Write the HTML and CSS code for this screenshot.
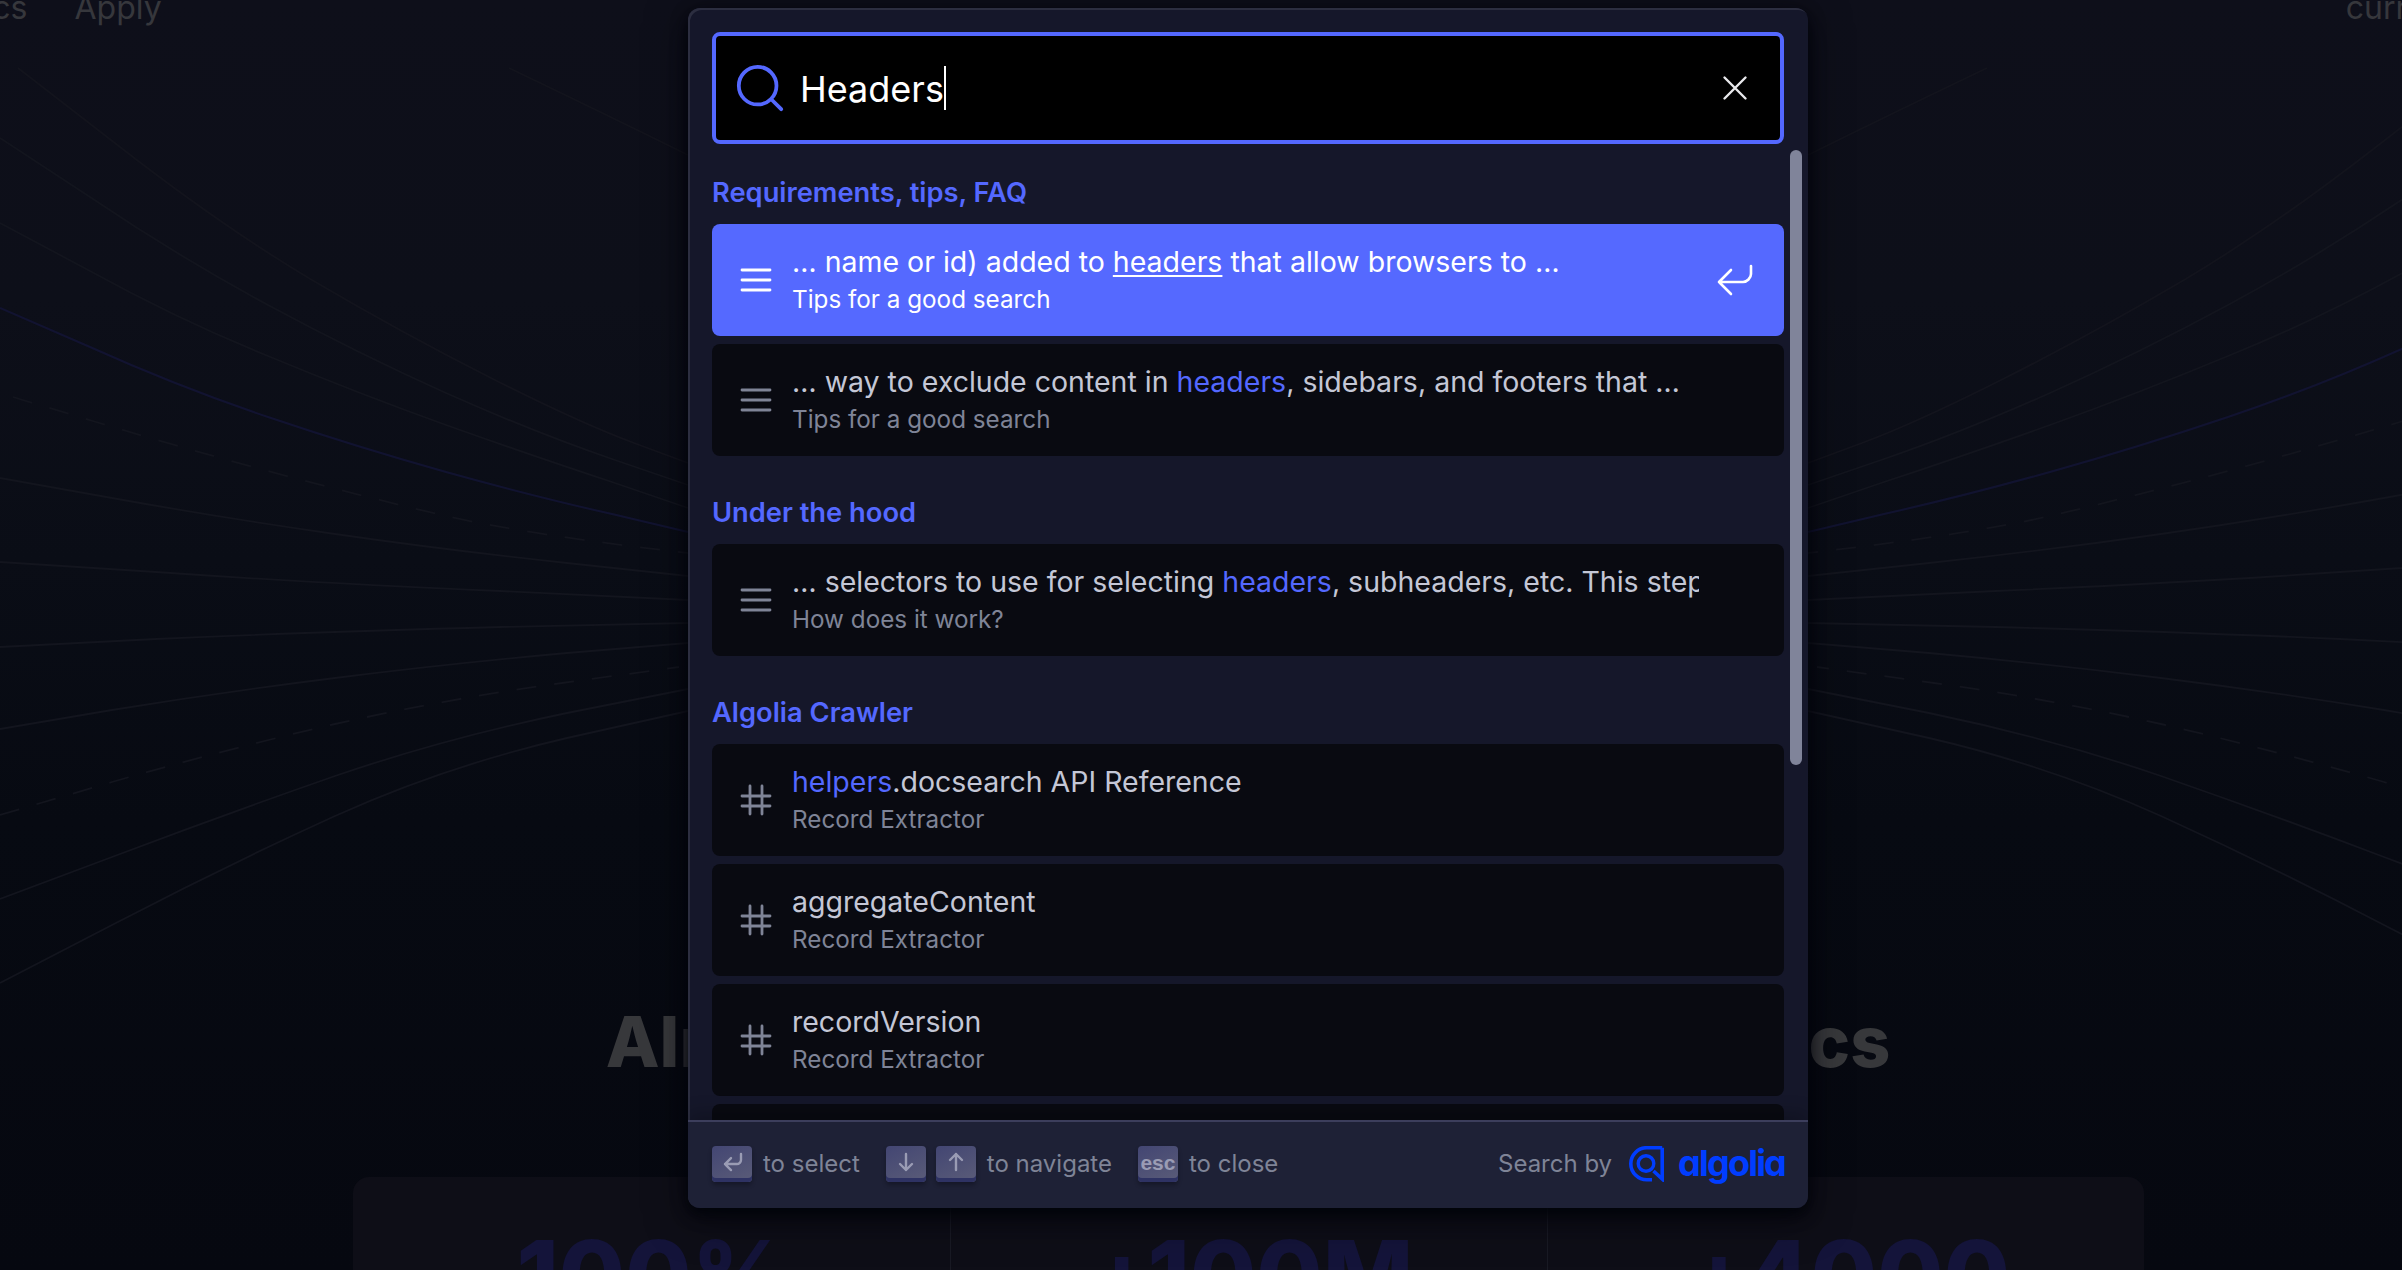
FILE: index.html
```html
<!DOCTYPE html>
<html lang="en">
<head>
<meta charset="utf-8">
<title>DocSearch</title>
<link rel="stylesheet" href="styles.css">
</head>
<body>
<div class="page">
  <svg class="rays" width="2496" height="1270" viewBox="0 0 2496 1270" fill="none">
    <defs>
      <g id="rayset">
        <path class="ray faint" d="M509 68Q603 113 688 155"/>
        <path class="ray faint" d="M18 68L120 147Q223 227 312 280Q402 333 491 378Q580 423 634 443L688 463"/>
        <path class="ray" d="M0 138L90 197Q179 257 268 305Q357 353 446 393Q536 433 612 459L688 485"/>
        <path class="ray" d="M0 223L90 271Q179 320 268 356Q357 393 446 425Q536 457 612 482L688 508"/>
        <path class="ray blue" d="M0 308L90 347Q179 387 268 417Q357 447 446 472Q536 497 612 514L688 532"/>
        <path class="ray dash" d="M13 397L96 422Q179 447 268 471Q357 495 446 516Q530 535 688 553"/>
        <path class="ray" d="M0 478L112 498Q223 518 335 534Q446 550 567 563L688 576"/>
        <path class="ray" d="M0 562L156 572Q312 583 500 591L688 600"/>
        <path class="ray" d="M0 647L156 639Q312 632 500 627L688 623"/>
        <path class="ray" d="M0 729L112 710Q223 692 335 678Q446 664 567 653L688 643"/>
        <path class="ray dash" d="M0 815L112 782Q223 750 335 724Q446 699 562 683L679 667"/>
        <path class="ray" d="M0 899L112 857Q223 815 335 776Q446 738 567 713L688 689"/>
        <path class="ray" d="M0 983L112 925Q223 867 335 816Q446 766 567 738L688 711"/>
      </g>
    </defs>
    <use href="#rayset"/>
    <use href="#rayset" transform="matrix(-1 0 0 1 2496 0)"/>
  </svg>

  <nav class="nav">
    <span class="nav-link">Docs</span>
    <span class="nav-link">Apply</span>
    <span class="nav-link nav-right">current</span>
  </nav>

  <h2 class="headline">Already powering open-source docs</h2>

  <section class="stats">
    <div class="stat">100%</div>
    <div class="stat"><span class="plus">+</span>100M</div>
    <div class="stat"><span class="plus">+</span>4000</div>
  </section>

  <div class="modal">
    <form class="searchbar">
      <svg class="search-icon" width="50" height="50" viewBox="0 0 20 20" fill="none"><path d="M14.386 14.386l4.0877 4.0877-4.0877-4.0877c-2.9418 2.9419-7.7115 2.9419-10.6533 0-2.9419-2.9418-2.9419-7.7115 0-10.6533 2.9418-2.9419 7.7115-2.9419 10.6533 0 2.9419 2.9418 2.9419 7.7115 0 10.6533z" stroke="currentColor" stroke-width="1.5" stroke-linecap="round" stroke-linejoin="round"/></svg>
      <span class="query">Headers</span><span class="caret"></span>
      <svg class="clear-icon" width="26" height="26" viewBox="0 0 26 26" fill="none"><path d="M2.5 2.5l21 21M23.5 2.5l-21 21" stroke="currentColor" stroke-width="2.4" stroke-linecap="round"/></svg>
    </form>

    <div class="dropdown">
      <section class="source">
        <div class="source-title">Requirements, tips, FAQ</div>
        <div class="hit selected">
          <svg class="hit-icon" width="40" height="40" viewBox="0 0 20 20" fill="none"><path d="M17 5H3M17 10H3M17 15H3" stroke="currentColor" stroke-width="1.4" stroke-linecap="round"/></svg>
          <div class="hit-body">
            <div class="hit-title">… name or id) added to <mark>headers</mark> that allow browsers to …</div>
            <div class="hit-path">Tips for a good search</div>
          </div>
          <svg class="hit-return" width="40" height="40" viewBox="0 0 20 20" fill="none"><path d="M18 3v4c0 2-2 4-4 4H2M8 17l-6-6 6-6" stroke="currentColor" stroke-width="1.3" stroke-linecap="round" stroke-linejoin="round"/></svg>
        </div>
        <div class="hit">
          <svg class="hit-icon" width="40" height="40" viewBox="0 0 20 20" fill="none"><path d="M17 5H3M17 10H3M17 15H3" stroke="currentColor" stroke-width="1.4" stroke-linecap="round"/></svg>
          <div class="hit-body">
            <div class="hit-title">… way to exclude content in <mark>headers</mark>, sidebars, and footers that …</div>
            <div class="hit-path">Tips for a good search</div>
          </div>
        </div>
      </section>

      <section class="source">
        <div class="source-title">Under the hood</div>
        <div class="hit">
          <svg class="hit-icon" width="40" height="40" viewBox="0 0 20 20" fill="none"><path d="M17 5H3M17 10H3M17 15H3" stroke="currentColor" stroke-width="1.4" stroke-linecap="round"/></svg>
          <div class="hit-body">
            <div class="hit-title">… selectors to use for selecting <mark>headers</mark>, subheaders, etc. This step is often</div>
            <div class="hit-path">How does it work?</div>
          </div>
        </div>
      </section>

      <section class="source">
        <div class="source-title">Algolia Crawler</div>
        <div class="hit">
          <svg class="hit-icon" width="40" height="40" viewBox="0 0 20 20" fill="none"><path d="M13 13h4-4V8H7v5h6v4-4H7V8H3h4V3v5h6V3v5h4-4v5zm-6 0v4-4H3h4z" stroke="currentColor" stroke-width="1.4" stroke-linecap="round" stroke-linejoin="round"/></svg>
          <div class="hit-body">
            <div class="hit-title"><mark>helpers</mark>.docsearch API Reference</div>
            <div class="hit-path">Record Extractor</div>
          </div>
        </div>
        <div class="hit">
          <svg class="hit-icon" width="40" height="40" viewBox="0 0 20 20" fill="none"><path d="M13 13h4-4V8H7v5h6v4-4H7V8H3h4V3v5h6V3v5h4-4v5zm-6 0v4-4H3h4z" stroke="currentColor" stroke-width="1.4" stroke-linecap="round" stroke-linejoin="round"/></svg>
          <div class="hit-body">
            <div class="hit-title">aggregateContent</div>
            <div class="hit-path">Record Extractor</div>
          </div>
        </div>
        <div class="hit">
          <svg class="hit-icon" width="40" height="40" viewBox="0 0 20 20" fill="none"><path d="M13 13h4-4V8H7v5h6v4-4H7V8H3h4V3v5h6V3v5h4-4v5zm-6 0v4-4H3h4z" stroke="currentColor" stroke-width="1.4" stroke-linecap="round" stroke-linejoin="round"/></svg>
          <div class="hit-body">
            <div class="hit-title">recordVersion</div>
            <div class="hit-path">Record Extractor</div>
          </div>
        </div>
        <div class="hit"></div>
      </section>
      <div class="scroll-thumb"></div>
    </div>

    <footer class="footer">
      <ul class="commands">
        <li class="command">
          <kbd class="key"><svg width="30" height="30" viewBox="0 0 15 15" fill="none"><path d="M12 3.53v3c0 1-1 2-2 2H4M7 11.53l-3-3 3-3" stroke="currentColor" stroke-width="1.2" stroke-linecap="round" stroke-linejoin="round"/></svg></kbd>
          <span class="command-label">to select</span>
        </li>
        <li class="command">
          <kbd class="key"><svg width="30" height="30" viewBox="0 0 15 15" fill="none"><path d="M7.5 3.5v8M10.5 8.5l-3 3-3-3" stroke="currentColor" stroke-width="1.2" stroke-linecap="round" stroke-linejoin="round"/></svg></kbd>
          <kbd class="key"><svg width="30" height="30" viewBox="0 0 15 15" fill="none"><path d="M7.5 11.5v-8M10.5 6.5l-3-3-3 3" stroke="currentColor" stroke-width="1.2" stroke-linecap="round" stroke-linejoin="round"/></svg></kbd>
          <span class="command-label">to navigate</span>
        </li>
        <li class="command">
          <kbd class="key key-text">esc</kbd>
          <span class="command-label">to close</span>
        </li>
      </ul>
      <div class="brand">
        <span class="brand-label">Search by</span>
        <svg class="brand-mark" width="35" height="36" viewBox="0 0 35 36" fill="none"><path d="M33.2 1.7H17.8C9 1.7 1.8 8.900 1.800 17.700S9 33.700 17.800 33.700H23M33.200 1.700V33L24.500 25" stroke="currentColor" stroke-width="3.600"/><circle cx="17" cy="17.500" r="7.800" stroke="currentColor" stroke-width="3.400"/></svg>
        <span class="brand-name">algolia</span>
      </div>
    </footer>
  </div>
</div>
</body>
</html>
```

FILE: styles.css
```css
* { box-sizing: border-box; }
html, body { margin: 0; padding: 0; height: 100%; overflow: hidden; background: #070a12; }
body { font-family: "Inter", "Liberation Sans", sans-serif; }

.page {
  position: relative;
  width: 2496px;
  height: 1270px;
  overflow: hidden;
  background: linear-gradient(180deg, #0e0f1a 0, #0d0f19 300px, #0a0d16 560px, #070a12 820px, #060810 1270px);
}

.rays { position: absolute; left: 0; top: 0; }
.ray { stroke: #13151e; stroke-width: 1.8; }
.ray.faint { stroke: #13141d; }
.ray.blue { stroke: #14153a; stroke-opacity: .75; stroke-width: 2; }
.ray.dash { stroke-dasharray: 20 18; }

.nav {
  position: relative;
  display: flex;
  gap: 47px;
  margin: -10px 41px 0 -50px;
  font-size: 32px;
  line-height: 36px;
  color: #36373c;
}
.nav-right { margin-left: auto; }

.headline {
  position: relative;
  margin: 0;
  padding-top: 974px;
  font-size: 70px;
  line-height: 84px;
  font-weight: 800;
  word-spacing: 7px;
  text-align: center;
  color: #37383b;
}

.stats {
  position: relative;
  display: grid;
  grid-template-columns: repeat(3, 1fr);
  width: 1791px;
  height: 300px;
  margin: 93px auto 0;
  border-radius: 16px;
  background: #0e0e17;
}
.stat {
  padding: 42px 0 0 5px;
  font-size: 96px;
  line-height: 112px;
  font-weight: 800;
  text-align: center;
  color: #14143a;
}
.plus { letter-spacing: -7px; }
.stat + .stat { border-left: 1px solid #191a24; }

.modal {
  position: absolute;
  top: 8px;
  left: 688px;
  width: 1120px;
  height: 1200px;
  display: flex;
  flex-direction: column;
  border-radius: 12px;
  background: #15172a;
  box-shadow: inset 2px 2px 0 #2c2e40, 0 6px 16px #000309, 0 10px 40px rgba(0, 3, 9, .5);
  overflow: hidden;
}

.searchbar {
  flex: none;
  display: flex;
  align-items: center;
  height: 112px;
  margin: 24px 24px 0;
  padding: 0 32px 0 19px;
  border: 4px solid #5468ff;
  border-radius: 8px;
  background: #000;
  color: #fff;
}
.search-icon { flex: none; color: #5468ff; }
.query { margin: 2px 0 0 15px; font-size: 36px; line-height: 48px; font-weight: 400; }
.caret { width: 2px; height: 44px; margin-left: 0; background: #fff; }
.clear-icon { margin-left: auto; color: #e9e9ec; }

.dropdown {
  position: relative;
  flex: 1;
  min-height: 0;
  padding: 16px 24px 0;
  overflow: hidden;
}
.source { padding-bottom: 16px; }
.source-title {
  height: 64px;
  font-size: 27.3px;
  line-height: 66px;
  font-weight: 600;
  color: #5468ff;
}
.hit {
  display: flex;
  align-items: center;
  height: 112px;
  margin-bottom: 8px;
  padding: 0 29px 0 24px;
  border-radius: 8px;
  background: #090a11;
  color: #c4c7d6;
}
.hit-icon { flex: none; color: #7f8497; }
.hit-body { flex: 1; min-width: 0; margin-left: 16px; margin-right: 56px; padding-top: 1px; overflow: hidden; white-space: nowrap; }
.hit-title { font-size: 28.5px; line-height: 38px; }
.hit-path { margin-top: 1px; font-size: 24.25px; line-height: 36px; color: #7f8497; }
.hit mark { background: none; color: #5468ff; }
.hit.selected { background: #5569ff; color: #fff; }
.hit.selected .hit-icon, .hit.selected .hit-path { color: #fff; }
.hit.selected mark { color: #fff; text-decoration: underline; text-underline-offset: 3px; text-decoration-thickness: 2px; }
.hit-return { flex: none; margin-left: -56px; color: #fff; }
.hit-body:has(+ .hit-return) { margin-right: 72px; }

.scroll-thumb {
  position: absolute;
  top: 6px;
  right: 6px;
  width: 12px;
  height: 615px;
  border-radius: 6px;
  background: #80849a;
}

.footer {
  flex: none;
  display: flex;
  align-items: center;
  justify-content: space-between;
  height: 88px;
  padding: 0 23px 0 24px;
  background: #1e2136;
  box-shadow: inset 0 2px 0 #3c3e5c, 0 -8px 16px rgba(0, 0, 0, .2);
  position: relative;
}
.commands { display: flex; gap: 26px; margin: 0; padding: 0; list-style: none; }
.command { display: flex; align-items: center; gap: 10px; }
.key {
  display: flex;
  align-items: center;
  justify-content: center;
  width: 40px;
  height: 36px;
  padding-bottom: 4px;
  border-radius: 4px;
  background: linear-gradient(-26.5deg, #5a5c78, #434673);
  box-shadow: inset 0 -4px 0 #2e3263, 0 3px 4px rgba(3, 4, 9, .3);
  color: #9a9cb4;
}
.key-text { font-family: "Liberation Sans", sans-serif; font-size: 21px; font-weight: 700; line-height: 1; }
.command-label { margin-left: 1px; font-size: 24px; line-height: 36px; color: #7f8497; }
.brand { display: flex; align-items: center; height: 36px; }
.brand-label { font-size: 24px; line-height: 36px; color: #7f8497; }
.brand-mark { margin-left: 17px; color: #003dff; }
.brand-name {
  margin: 0 0 3px 14px;
  font-size: 36px;
  line-height: 36px;
  font-weight: 700;
  letter-spacing: -1.8px;
  color: #003dff;
  font-feature-settings: "cv11" 1;
}
```
